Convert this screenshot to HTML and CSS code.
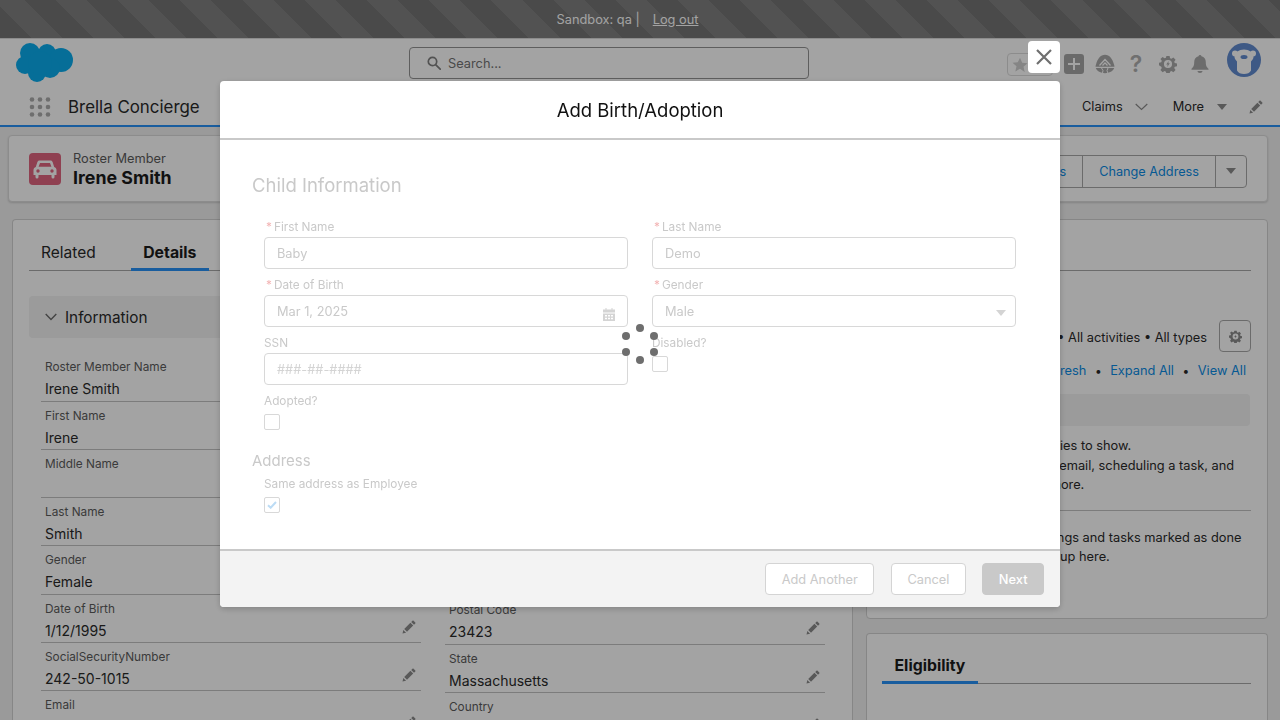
FILE: index.html
```html
<!DOCTYPE html>
<html lang="en">
<head>
<meta charset="UTF-8">
<title>Brella Concierge</title>
<link rel="stylesheet" href="styles.css">
</head>
<body>
<svg class="defs" width="0" height="0">
	<symbol id="pencil" viewBox="0 0 14 14">
		<path d="M0.5 13.5l0.8-3.6 2.8 2.8zM2.2 9l6.2-6.2 2.8 2.8-6.2 6.2zM9.2 2l1.3-1.3c.3-.3.8-.3 1.1 0l1.7 1.7c.3.3.3.8 0 1.1L12 4.8z"/>
	</symbol>
	<symbol id="gear" viewBox="0 0 20 20">
		<path fill-rule="evenodd" d="M8.200 1h3.600l.5 2.500 1.500.7 2.200-1.400 2.400 2.600-1.500 2.100.6 1.500 2.500.5v3l-2.500.5-.6 1.500 1.500 2.100-2.400 2.600-2.200-1.400-1.500.7-.5 2.500H8.200l-.5-2.500-1.500-.7-2.200 1.400-2.400-2.600 1.500-2.100-.6-1.500L0 11.500v-3l2.500-.5.6-1.500-1.500-2.100L4 2.300l2.200 1.400 1.500-.7zM10 5.500a4.500 4.500 0 1 0 0 9 4.500 4.500 0 0 0 0-9zM10.800 6.800L8 10.600h1.700l-.6 2.600 2.900-3.900h-1.700z"/>
	</symbol>
</svg>

<div class="sandbox-bar">
	<span>Sandbox: qa |</span>
	<a class="logout">Log out</a>
</div>

<header class="global-header">
	<svg class="logo" width="58" height="40" viewBox="0 0 58 40">
		<circle cx="15" cy="10" r="10"/>
		<circle cx="32" cy="10" r="9"/>
		<circle cx="46" cy="17" r="12"/>
		<circle cx="10" cy="22" r="9"/>
		<circle cx="22" cy="30" r="9"/>
		<circle cx="35" cy="25" r="10"/>
		<circle cx="25" cy="20" r="12"/>
	</svg>
	<div class="search-box">
		<svg width="14" height="14" viewBox="0 0 14 14" fill="none" stroke="#808080" stroke-width="1.700">
			<circle cx="5.500" cy="5.500" r="4.200"/>
			<path d="M8.600 8.600l4.600 4.600" stroke-linecap="round"/>
		</svg>
		<span>Search...</span>
	</div>
	<div class="global-actions">
		<div class="fav-btn">
			<svg width="16" height="16" viewBox="0 0 16 16"><path d="M8 .8l2.200 4.900 5.300.5-4 3.500 1.200 5.300L8 11.800l-4.700 2.700 1.200-5.300-4-3.500 5.300-.5z"/></svg>
		</div>
		<div class="plus-btn">
			<svg width="12" height="12" viewBox="0 0 12 12"><path d="M5 0h2v5h5v2H7v5H5V7H0V5h5z"/></svg>
		</div>
		<svg class="act-icon" width="20" height="20" viewBox="0 0 20 20">
			<path d="M10 .8C5.500.8 2.500 5 1 10.500c-.2.700-.4 1.500-.5 2.300h19c-.1-.8-.3-1.600-.5-2.300C17.500 5 14.500.8 10 .8z"/>
			<path d="M4.500 11.500L10 5.500l5.500 6M7.500 11.500l2.500-2.600 2.500 2.600" fill="none" stroke="#fff" stroke-width="1.300"/>
			<path d="M.8 14c.8 3 5 5.200 9.200 5.200s8.400-2.200 9.200-5.200z"/>
			<path d="M6.500 14l1.500 2.500-.6 3M13 14l-1 2.600 1 2.800" fill="none" stroke="#fff" stroke-width="1"/>
		</svg>
		<span class="help-icon">?</span>
		<svg class="act-icon" width="18" height="18" viewBox="0 0 20 20"><use href="#gear"/></svg>
		<svg class="act-icon" width="20" height="20" viewBox="0 0 20 20">
			<path d="M10 1c.8 0 1.400.6 1.500 1.300 2.700.6 4.300 2.900 4.300 5.700 0 4 1 5.300 2.700 6.700v1H1.500v-1C3.200 13.300 4.200 12 4.200 8c0-2.800 1.600-5.100 4.300-5.700C8.600 1.600 9.200 1 10 1zM7.500 17h5c0 1.200-1.100 2-2.500 2s-2.500-.8-2.500-2z"/>
		</svg>
		<svg class="avatar" width="34" height="34" viewBox="0 0 34 34">
			<circle cx="17" cy="17" r="17" fill="#628cd0"/>
			<circle cx="8" cy="10.500" r="3" fill="#fff"/>
			<circle cx="26" cy="10.500" r="3" fill="#fff"/>
			<path d="M7.500 14c0-4.500 4.500-7.500 9.500-7.500s9.500 3 9.500 7.500c0 2-1.500 3-2.500 4.500v9c-1 2.500-4 3.500-7 3.500s-6-1-7-3.500v-9c-1-1.500-2.500-2.500-2.500-4.500z" fill="#fff"/>
			<ellipse cx="17" cy="14" rx="3.500" ry="2" fill="#628cd0"/>
		</svg>
	</div>
</header>

<nav class="app-nav">
	<svg class="waffle" width="22" height="20" viewBox="0 0 22 20">
		<circle cx="3" cy="2.500" r="2.300"/><circle cx="11" cy="2.500" r="2.300"/><circle cx="19" cy="2.500" r="2.300"/>
		<circle cx="3" cy="10" r="2.300"/><circle cx="11" cy="10" r="2.300"/><circle cx="19" cy="10" r="2.300"/>
		<circle cx="3" cy="17.500" r="2.300"/><circle cx="11" cy="17.500" r="2.300"/><circle cx="19" cy="17.500" r="2.300"/>
	</svg>
	<span class="app-name">Brella Concierge</span>
	<div class="nav-right">
		<span class="nav-item">Claims</span>
		<svg class="nav-chevron" width="13" height="8" viewBox="0 0 13 8" fill="none" stroke="#8c8c8c" stroke-width="1.200"><path d="M.7 1l5.800 5.500L12.300 1"/></svg>
		<span class="nav-item nav-more">More</span>
		<span class="caret nav-caret"></span>
		<svg class="nav-pencil" width="14" height="14"><use href="#pencil"/></svg>
	</div>
</nav>

<section class="highlights">
	<div class="record-icon">
		<svg width="24" height="20" viewBox="0 0 24 20">
			<path fill-rule="evenodd" d="M6.500 1.500h11c1 0 1.800.6 2.100 1.500l1.600 5c1.300.4 2.300 1.600 2.300 3v5h-2v2a1.500 1.500 0 0 1-3 0v-2H5.500v2a1.500 1.500 0 0 1-3 0v-2h-2v-5c0-1.400 1-2.600 2.300-3l1.600-5c.3-.9 1.100-1.500 2.100-1.500zM7 4L5.600 7.800h12.800L17 4zM5 10.300a1.700 1.700 0 1 0 0 3.400 1.700 1.700 0 0 0 0-3.400zM19 10.300a1.700 1.700 0 1 0 0 3.400 1.700 1.700 0 0 0 0-3.400z"/>
		</svg>
	</div>
	<div class="record-title">
		<div class="record-type">Roster Member</div>
		<div class="record-name">Irene Smith</div>
	</div>
	<div class="btn-group">
		<a class="group-btn">Claims</a>
		<a class="group-btn">Change Address</a>
		<a class="group-btn group-more"><span class="caret"></span></a>
	</div>
</section>

<main class="columns">
	<section class="details-panel">
		<div class="tabs">
			<a class="tab">Related</a>
			<a class="tab tab-active">Details</a>
		</div>
		<div class="section-head">
			<svg width="12" height="8" viewBox="0 0 12 8" fill="none" stroke="#6a6a6a" stroke-width="1.400"><path d="M.7 1l5.300 5.500L11.300 1"/></svg>
			<span>Information</span>
		</div>
		<div class="field-cols">
			<div class="field-col">
				<div class="field"><label>Roster Member Name</label><div class="value">Irene Smith</div></div>
				<div class="field"><label>First Name</label><div class="value">Irene</div></div>
				<div class="field"><label>Middle Name</label><div class="value"></div></div>
				<div class="field"><label>Last Name</label><div class="value">Smith</div></div>
				<div class="field"><label>Gender</label><div class="value">Female</div></div>
				<div class="field"><label>Date of Birth</label><div class="value">1/12/1995</div><svg class="edit" width="14" height="14"><use href="#pencil"/></svg></div>
				<div class="field"><label>SocialSecurityNumber</label><div class="value">242-50-1015</div><svg class="edit" width="14" height="14"><use href="#pencil"/></svg></div>
				<div class="field"><label>Email</label><div class="value"></div><svg class="edit" width="14" height="14"><use href="#pencil"/></svg></div>
			</div>
			<div class="field-col field-col-right">
				<div class="field"><label>Postal Code</label><div class="value">23423</div><svg class="edit" width="14" height="14"><use href="#pencil"/></svg></div>
				<div class="field"><label>State</label><div class="value">Massachusetts</div><svg class="edit" width="14" height="14"><use href="#pencil"/></svg></div>
				<div class="field"><label>Country</label><div class="value"></div><svg class="edit" width="14" height="14"><use href="#pencil"/></svg></div>
			</div>
		</div>
	</section>

	<aside class="side-col">
		<section class="activity-card">
			<div class="tab-line"></div>
			<div class="filter-row">
				<span>Filters: All time &bull; All activities &bull; All types</span>
				<div class="gear-btn"><svg width="13" height="13" viewBox="0 0 20 20"><use href="#gear"/></svg></div>
			</div>
			<div class="link-row">
				<a>Refresh</a><span class="dot">&bull;</span><a>Expand All</a><span class="dot">&bull;</span><a>View All</a>
			</div>
			<div class="upcoming-bar"></div>
			<p class="empty-text">No activities to show.<br>Get started by sending an email, scheduling a task, and<br>more.</p>
			<div class="activity-rule"></div>
			<p class="empty-text empty-past">No past activity. Past meetings and tasks marked as done<br>show up here.</p>
		</section>
		<section class="eligibility-card">
			<div class="tab-line">
				<a class="tab tab-active elig-tab">Eligibility</a>
			</div>
		</section>
	</aside>
</main>

<div class="backdrop"></div>

<div class="modal">
	<a class="modal-close">
		<svg width="18" height="18" viewBox="0 0 18 18" fill="none" stroke="#6f6f6f" stroke-width="2.200"><path d="M2 2l14 14M16 2L2 16"/></svg>
	</a>
	<div class="modal-head">Add Birth/Adoption</div>
	<div class="modal-body">
		<h2 class="form-title">Child Information</h2>
		<div class="form-grid">
			<div class="form-item">
				<label><span class="req">*</span>First Name</label>
				<div class="input">Baby</div>
			</div>
			<div class="form-item">
				<label><span class="req">*</span>Last Name</label>
				<div class="input">Demo</div>
			</div>
			<div class="form-item">
				<label><span class="req">*</span>Date of Birth</label>
				<div class="input">Mar 1, 2025
					<svg class="input-icon" width="12" height="13" viewBox="0 0 12 13"><path fill-rule="evenodd" d="M2.500 0h1v1.500h5V0h1v1.500H12v3H0v-3h2.500zM0 5.500h12V13H0zM2 7v1.500h2V7zM5 7v1.500h2V7zM8 7v1.500h2V7zM2 9.700v1.500h2V9.700zM5 9.700v1.500h2V9.700zM8 9.700v1.500h2V9.700z"/></svg>
				</div>
			</div>
			<div class="form-item">
				<label><span class="req">*</span>Gender</label>
				<div class="input">Male<span class="select-caret"></span></div>
			</div>
			<div class="form-item">
				<label class="plain">SSN</label>
				<div class="input input-hint">###-##-####</div>
			</div>
			<div class="form-item">
				<label class="plain">Disabled?</label>
				<div class="check"></div>
			</div>
			<div class="form-item">
				<label class="plain">Adopted?</label>
				<div class="check"></div>
			</div>
		</div>
		<h3 class="form-sub">Address</h3>
		<div class="form-same">
			<label class="plain">Same address as Employee</label>
			<div class="check">
				<svg width="10" height="8" viewBox="0 0 10 8" fill="none" stroke="#bcdcf5" stroke-width="2"><path d="M1 4.200l2.700 2.500L9 1"/></svg>
			</div>
		</div>
	</div>
	<div class="modal-foot">
		<a class="foot-btn">Add Another</a>
		<a class="foot-btn">Cancel</a>
		<a class="foot-btn foot-next">Next</a>
	</div>
	<div class="spinner">
		<svg width="40" height="40" viewBox="0 0 40 40">
			<circle cx="20" cy="4" r="4"/><circle cx="34" cy="12" r="4"/><circle cx="34" cy="28" r="4"/>
			<circle cx="20" cy="36" r="4"/><circle cx="6" cy="28" r="4"/><circle cx="6" cy="12" r="4"/>
		</svg>
	</div>
</div>
</body>
</html>
```

FILE: styles.css
```css
* {
	box-sizing: border-box;
}
html, body {
	height: 720px;
	overflow: hidden;
}
body {
	margin: 0;
	background: #f1f1f1;
	color: #2a2a2a;
	font-family: Inter, "Liberation Sans", sans-serif;
	font-size: 12.800px;
}
.defs {
	display: block;
	height: 0;
}
p, h2, h3 {
	margin: 0;
	font-weight: 400;
}

/* top bars */
.sandbox-bar {
	height: 38px;
	display: flex;
	align-items: center;
	justify-content: center;
	gap: 13px;
	padding-right: 25px;
	color: #fff;
	background: repeating-linear-gradient(45deg, #747474 0, #747474 22px, #808080 22px, #808080 44px);
}
.logout {
	text-decoration: underline;
}
.global-header {
	position: relative;
	height: 50px;
	background: #fff;
	display: flex;
	align-items: flex-start;
	border-top: 1px solid #dcdcdc;
}
.logo {
	margin: 4px 0 0 15px;
	fill: #0aadee;
}
.search-box {
	width: 400px;
	height: 32px;
	margin: 8px 0 0 336px;
	padding-left: 17px;
	display: flex;
	align-items: center;
	gap: 7px;
	border: 1.500px solid #939393;
	border-radius: 4px;
	color: #747474;
}
.global-actions {
	display: flex;
	align-items: center;
	margin-left: 198px;
	height: 40px;
	margin-top: 5px;
}
.fav-btn {
	width: 46px;
	height: 23px;
	padding: 3px 0 0 4px;
	border: 1px solid #dcdcdc;
	border-radius: 4px;
	fill: #d0d0d0;
	margin-right: 11px;
}
.plus-btn {
	width: 20px;
	height: 20px;
	border-radius: 3px;
	background: #a7a7a7;
	fill: #fff;
	display: flex;
	align-items: center;
	justify-content: center;
	margin-right: 11px;
}
.act-icon {
	fill: #aaa;
}
.help-icon {
	width: 20px;
	margin: 0 13px 0 11px;
	color: #b0b0b0;
	font-size: 23px;
	font-weight: 600;
	text-align: center;
}
.act-icon + .avatar {
	margin: -8px 0 0 17px;
}
.global-actions .act-icon + .act-icon {
	margin-left: 13px;
}
.app-nav {
	height: 39px;
	background: #fff;
	display: flex;
	align-items: center;
	padding: 0 17px 0 29px;
	border-bottom: 2px solid #2892f8;
}
.waffle {
	fill: #adadad;
}
.app-name {
	margin-left: 17px;
	font-size: 16.900px;
}
.nav-right {
	margin-left: auto;
	display: flex;
	align-items: center;
}
.nav-chevron {
	margin-left: 12px;
}
.nav-more {
	margin-left: 25px;
}
.nav-caret {
	margin-left: 13px;
}
.nav-pencil {
	fill: #8c8c8c;
	margin-left: 22px;
}
.caret {
	display: inline-block;
	width: 0;
	height: 0;
	border-left: 5.500px solid transparent;
	border-right: 5.500px solid transparent;
	border-top: 6.500px solid #8c8c8c;
}

/* record highlights */
.highlights {
	height: 67px;
	margin: 8px 12px 0 8px;
	padding-left: 20px;
	padding-right: 20px;
	display: flex;
	align-items: center;
	background: #fff;
	border: 1px solid #dcdcdc;
	border-radius: 4px;
	box-shadow: 0 1px 2px rgba(0,0,0,.15);
}
.record-icon {
	width: 32px;
	height: 32px;
	border-radius: 4px;
	background: #e0647f;
	fill: #fff;
	display: flex;
	align-items: center;
	justify-content: center;
}
.record-title {
	margin-left: 12px;
	padding-top: 1px;
}
.record-type {
	line-height: 18px;
	color: #5c5c5c;
}
.record-name {
	font-size: 17.800px;
	font-weight: 700;
	line-height: 20px;
	color: #1c1c1c;
}
.btn-group {
	display: flex;
	height: 33px;
	margin: 5px 0 0 auto;
	border: 1px solid #a8a8a8;
	border-radius: 4px;
}
.group-btn {
	padding: 0 16px;
	display: flex;
	align-items: center;
	font-size: 12.700px;
	color: #0a8ce6;
	border-left: 1px solid #a8a8a8;
}
.group-btn:first-child {
	border-left: 0;
}
.group-more {
	width: 31px;
	padding: 0;
	justify-content: center;
}

/* main columns */
.columns {
	display: flex;
	gap: 13px;
	height: 501px;
	overflow: hidden;
	margin: 17px 12px 0 12px;
}
.details-panel {
	width: 841px;
	padding: 15px 16px 0;
	overflow: hidden;
	background: #fff;
	border: 1px solid #d2d2d2;
	border-bottom: 0;
	border-radius: 4px 4px 0 0;
}
.tabs {
	display: flex;
	height: 36px;
	border-bottom: 1px solid #a8a8a8;
}
.tab {
	height: 36px;
	padding: 0 12px;
	font-size: 15.500px;
	line-height: 36px;
}
.tab-active {
	margin-left: 23px;
	padding: 0 12.500px;
	font-size: 15.800px;
	font-weight: 700;
	color: #1c1c1c;
	border-bottom: 3px solid #2892f8;
}
.section-head {
	height: 42px;
	margin-top: 25px;
	padding-left: 16px;
	display: flex;
	align-items: center;
	gap: 8px;
	font-size: 15.300px;
	background: #f3f3f3;
	border-radius: 4px;
}
.field-cols {
	display: flex;
	gap: 24px;
	margin: 15.300px 0 0 12px;
}
.field-col {
	width: 380px;
}
.field-col-right {
	margin-top: 243px;
}
.field {
	position: relative;
	height: 48.300px;
	padding: 5px 0 0 4px;
	border-bottom: 1.500px solid #c2c2c2;
}
.field label {
	display: block;
	font-size: 11.800px;
	line-height: 18px;
	color: #5c5c5c;
}
.field .value {
	font-size: 14px;
	line-height: 25px;
}
.edit {
	position: absolute;
	right: 5px;
	top: 25px;
	fill: #8c8c8c;
}

/* right column */
.side-col {
	width: 402px;
	display: flex;
	flex-direction: column;
	gap: 14px;
}
.activity-card, .eligibility-card {
	padding: 15px 16px 16px;
	background: #fff;
	border: 1px solid #d2d2d2;
	border-radius: 4px;
}
.activity-card {
	flex: none;
	height: 400px;
}
.eligibility-card {
	flex: 1;
	padding-top: 14px;
	padding-left: 15px;
	border-bottom: 0;
	border-radius: 4px 4px 0 0;
}
.tab-line {
	height: 36px;
	display: flex;
	border-bottom: 1px solid #a8a8a8;
}
.elig-tab {
	margin-left: 0;
}
.filter-row {
	margin-top: 49px;
	height: 32px;
	display: flex;
	align-items: center;
	justify-content: flex-end;
	gap: 12px;
}
.filter-row span {
	padding-top: 2px;
}
.gear-btn {
	width: 32px;
	height: 32px;
	display: flex;
	align-items: center;
	justify-content: center;
	fill: #8c8c8c;
	border: 1px solid #a8a8a8;
	border-radius: 4px;
}
.link-row {
	margin-top: 9px;
	padding-right: 5px;
	line-height: 20px;
	display: flex;
	justify-content: flex-end;
	color: #0a8ce6;
}
.dot {
	margin: 0 8.500px;
	color: #2a2a2a;
	font-size: 12px;
}
.upcoming-bar {
	height: 32px;
	margin-top: 13px;
	background: #f3f3f3;
	border-radius: 4px;
	margin-right: 1px;
}
.empty-text {
	margin-top: 10px;
	line-height: 19.500px;
	text-align: center;
	white-space: nowrap;
}
.activity-rule {
	margin-top: 15px;
	border-top: 1px solid #c2c2c2;
}
.empty-past {
	margin-top: 17px;
}

/* dimmed page */
.backdrop {
	position: fixed;
	inset: 0;
	background: rgba(0,0,0,.36);
}

/* modal */
.modal {
	position: fixed;
	left: 220px;
	top: 81px;
	width: 840px;
	height: 526px;
	display: flex;
	flex-direction: column;
	background: #fff;
	border-radius: 4px;
	box-shadow: 0 2px 6px rgba(0,0,0,.2);
}
.modal-close {
	position: absolute;
	top: -40px;
	right: 0;
	width: 32px;
	height: 32px;
	display: flex;
	align-items: center;
	justify-content: center;
	background: #fff;
	border-radius: 4px;
}
.modal-head {
	height: 59px;
	flex: none;
	text-align: center;
	color: #111;
	font-size: 18.500px;
	line-height: 58px;
	border-bottom: 2px solid #c9c9c9;
}
.modal-body {
	flex: 1;
	padding: 31px 44px 0 32px;
	color: #c9c9c9;
}
.form-title {
	font-size: 18.500px;
	line-height: 28px;
}
.form-grid {
	display: grid;
	grid-template-columns: 364px 364px;
	column-gap: 24px;
	margin: 19px 0 0 12px;
}
.form-item {
	height: 58px;
}
.form-item label, .form-same label {
	display: block;
	height: 19px;
	padding-left: 2px;
	font-size: 11.800px;
	line-height: 18px;
}
label.plain {
	padding-left: 0;
}
.req {
	color: #f3b4b4;
	margin-right: 2px;
}
.input {
	position: relative;
	height: 32px;
	padding-left: 12px;
	line-height: 31px;
	border: 1px solid #d8d8d8;
	border-radius: 4px;
}
.input-hint {
	color: #d4d4d4;
}
.input-icon {
	position: absolute;
	right: 12px;
	top: 12px;
	fill: #d4d4d4;
}
.select-caret {
	position: absolute;
	right: 9px;
	top: 14px;
	border-left: 5.500px solid transparent;
	border-right: 5.500px solid transparent;
	border-top: 6.500px solid #d4d4d4;
}
.check {
	width: 16px;
	height: 16px;
	margin-top: 3px;
	display: flex;
	align-items: center;
	justify-content: center;
	border: 1px solid #d8d8d8;
	border-radius: 2px;
}
.form-sub {
	font-size: 15px;
	line-height: 22px;
}
.form-same {
	margin: 3px 0 0 12px;
}
.form-same .check {
	margin-top: 3px;
}
.form-same label {
	padding-left: 0;
}
.modal-foot {
	height: 58px;
	flex: none;
	padding-right: 16px;
	display: flex;
	align-items: center;
	justify-content: flex-end;
	gap: 16.500px;
	background: #f3f3f3;
	border-top: 2px solid #c9c9c9;
	border-radius: 0 0 4px 4px;
}
.foot-btn {
	height: 32px;
	padding: 0 15.500px;
	line-height: 31px;
	color: #c9c9c9;
	background: #fff;
	border: 1px solid #d4d4d4;
	border-radius: 4px;
}
.foot-next {
	color: #fff;
	font-weight: 500;
	background: #c9c9c9;
	border-color: #c9c9c9;
}
.spinner {
	position: absolute;
	inset: 0;
	display: flex;
	align-items: center;
	justify-content: center;
	fill: #6e6e6e;
}
```
